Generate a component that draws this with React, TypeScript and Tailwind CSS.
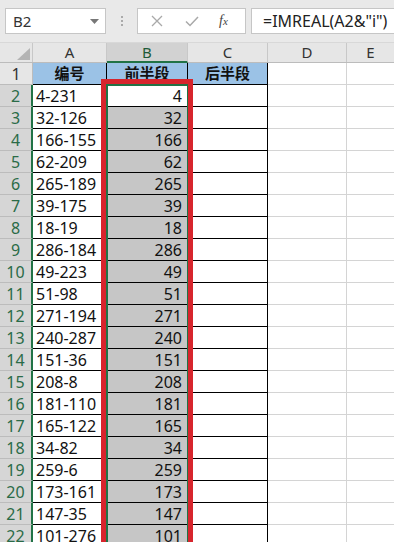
import React from "react";

const rows: [string, string][] = [
  ["4-231", "4"],
  ["32-126", "32"],
  ["166-155", "166"],
  ["62-209", "62"],
  ["265-189", "265"],
  ["39-175", "39"],
  ["18-19", "18"],
  ["286-184", "286"],
  ["49-223", "49"],
  ["51-98", "51"],
  ["271-194", "271"],
  ["240-287", "240"],
  ["151-36", "151"],
  ["208-8", "208"],
  ["181-110", "181"],
  ["165-122", "165"],
  ["34-82", "34"],
  ["259-6", "259"],
  ["173-161", "173"],
  ["147-35", "147"],
  ["101-276", "101"],
];

export default function App() {
  return (
    <div className="relative w-[394px] h-[542px] overflow-hidden bg-white font-['Noto_Sans','Noto_Sans_CJK_SC',sans-serif] text-[#111]">
      {/* formula bar */}
      <div className="h-[43px] bg-[#e9e9e9] flex items-start pt-[8px] border-b border-[#d8d8d8] box-border">
        <div className="ml-[5px] w-[101px] h-[26px] bg-white border border-[#c6c6c6] box-border flex items-center justify-between pl-[7px] pr-[6px]">
          <span className="text-[15px] text-[#333] leading-none">B2</span>
          <svg width="9" height="5" viewBox="0 0 9 5">
            <path d="M0 0 L9 0 L4.5 5 Z" fill="#777" />
          </svg>
        </div>
        <div className="w-[31px] h-[26px] flex flex-col items-center justify-center gap-[2px]">
          <div className="w-[2px] h-[2px] bg-[#aaa]" />
          <div className="w-[2px] h-[2px] bg-[#aaa]" />
          <div className="w-[2px] h-[2px] bg-[#aaa]" />
        </div>
        <div className="w-[109px] h-[26px] bg-white border border-[#c6c6c6] box-border flex items-center">
          <svg className="ml-[13px]" width="12" height="12" viewBox="0 0 12 12">
            <path d="M1 1 L11 11 M11 1 L1 11" stroke="#a9a9a9" strokeWidth="1.3" fill="none" />
          </svg>
          <svg className="ml-[22px]" width="14" height="11" viewBox="0 0 14 11">
            <path d="M1 5.5 L5 9.5 L13 1" stroke="#a9a9a9" strokeWidth="1.5" fill="none" />
          </svg>
          <span className="ml-[20px] font-['Liberation_Serif',serif] italic text-[14px] text-[#444] leading-none">
            f<span className="text-[11px]">x</span>
          </span>
        </div>
        <div className="ml-[5px] flex-1 h-[26px] bg-white border border-[#c6c6c6] border-r-0 box-border flex items-center pl-[11px]">
          <span className="text-[16px] text-[#222] leading-none whitespace-nowrap">=IMREAL(A2&amp;"i")</span>
        </div>
      </div>

      {/* column header */}
      <div className="flex h-[20px] bg-[#e6e6e6] border-b border-[#bcbcbc] box-border">
        <div className="w-[33px] h-full border-r border-[#c8c8c8] box-border relative">
          <svg className="absolute left-[17px] top-[5px]" width="13" height="12" viewBox="0 0 13 12">
            <path d="M13 0 L13 12 L0 12 Z" fill="#b4b4b4" />
          </svg>
        </div>
        <div className="w-[74px] h-full border-r border-[#c8c8c8] box-border flex items-center justify-center text-[15px] text-[#333]">A</div>
        <div className="w-[81px] h-[20px] bg-[#d2d2d2] border-r border-[#c8c8c8] border-b-2 border-b-[#217346] box-border flex items-center justify-center text-[15px] text-[#1f5a38]">B</div>
        <div className="w-[80px] h-full border-r border-[#c8c8c8] box-border flex items-center justify-center text-[15px] text-[#333]">C</div>
        <div className="w-[79px] h-full border-r border-[#c8c8c8] box-border flex items-center justify-center text-[15px] text-[#333]">D</div>
        <div className="flex-1 h-full flex items-center justify-center text-[15px] text-[#333]">E</div>
      </div>

      {/* row 1 */}
      <div className="flex h-[22px]">
        <div className="w-[33px] h-full bg-[#e6e6e6] border-r border-b border-[#bcbcbc] box-border flex items-center justify-center text-[16px] text-[#333]">1</div>
        <div className="w-[74px] h-full bg-[#9bc2e6] border-r border-b border-black box-border flex items-center justify-center text-[15px] font-bold">编号</div>
        <div className="w-[81px] h-full bg-[#9bc2e6] border-r border-b border-black box-border flex items-center justify-center text-[15px] font-bold">前半段</div>
        <div className="w-[80px] h-full bg-[#9bc2e6] border-r border-b border-black box-border flex items-center justify-center text-[15px] font-bold">后半段</div>
        <div className="w-[79px] h-full border-r border-b border-[#d4d4d4] box-border" />
        <div className="flex-1 h-full border-b border-[#d4d4d4] box-border" />
      </div>

      {rows.map(([a, b], i) => (
        <div key={i} className="flex h-[22px]">
          <div className="w-[33px] h-full bg-[#d6d6d6] border-r-2 border-r-[#217346] border-b border-b-[#bcbcbc] box-border flex items-center justify-center text-[16px] text-[#2a6b47]">
            {i + 2}
          </div>
          <div className="w-[74px] h-full border-r border-b border-black box-border flex items-center pl-[3px] text-[16px] leading-none">{a}</div>
          <div
            className={
              i === 0
                ? "w-[81px] h-full bg-white border-r border-b border-black box-border flex items-center justify-end pr-[5px] text-[16px] leading-none"
                : "w-[81px] h-full bg-[#c6c6c6] border-r border-b border-black box-border flex items-center justify-end pr-[5px] text-[16px] leading-none"
            }
          >
            {b}
          </div>
          <div className="w-[80px] h-full border-r border-b border-black box-border" />
          <div className="w-[79px] h-full border-r border-b border-[#d4d4d4] box-border" />
          <div className="flex-1 h-full border-b border-[#d4d4d4] box-border" />
        </div>
      ))}

      {/* selection border */}
      <div className="absolute left-[106px] top-[84px] w-[83px] h-[520px] border-2 border-[#217346] box-border pointer-events-none" />
      {/* red annotation */}
      <div className="absolute left-[101px] top-[79px] w-[92px] h-[520px] border-[5px] border-[#d7252d] box-border pointer-events-none" />
    </div>
  );
}
